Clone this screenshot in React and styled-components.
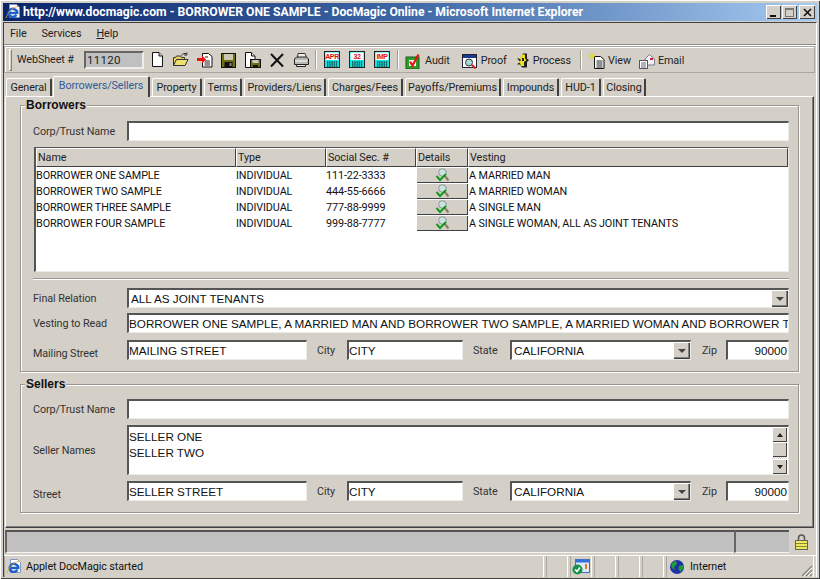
import React from 'react';
import styled, { createGlobalStyle } from 'styled-components';

const GlobalStyle = createGlobalStyle`
    html, body {
        margin: 0;
        padding: 0;
        overflow: hidden;
        background: #d4d0c8;
    }
`;

const UI_FONT = 'Roboto, Tahoma, sans-serif';
const FIELD_FONT = '"Liberation Sans", Arial, sans-serif';
const UI_SIZE = '10.8px';

const Win = styled.div`
    width: 820px;
    height: 579px;
    box-sizing: border-box;
    padding: 3px 3px 2px;
    background: #d4d0c8;
    box-shadow: inset 1px 1px 0 #fff, inset -1px -1px 0 #404040;
    display: flex;
    flex-direction: column;
    font: ${UI_SIZE} ${UI_FONT};
    letter-spacing: -0.1px;
    color: #222;
`;

const TitleBar = styled.div`
    height: 18px;
    flex: none;
    display: flex;
    align-items: center;
    padding: 0 2px;
    background: linear-gradient(90deg, #0a246a 0%, #3f68a6 50%, #a6caf0 100%);
`;

const TitleText = styled.div`
    flex: 1;
    margin-left: 2px;
    color: #fff;
    font: bold 12.2px ${UI_FONT};
    letter-spacing: 0;
    white-space: nowrap;
    overflow: hidden;
`;

const CaptionBtn = styled.div`
    width: ${p => p.$w || 15}px;
    height: 14px;
    margin-left: ${p => p.$gap || 0}px;
    background: #d4d0c8;
    box-sizing: border-box;
    box-shadow: inset 1px 1px 0 #fff, inset -1px -1px 0 #404040;
    display: flex;
    align-items: center;
    justify-content: center;
`;

const Client = styled.div`
    flex: 1;
    min-height: 0;
    display: flex;
    flex-direction: column;
    border-top: 1px solid #404040;
    border-left: 1px solid #404040;
    border-right: 1px solid #fff;
    margin-top: 1px;
`;

const MenuBar = styled.div`
    height: 21px;
    flex: none;
    display: flex;
    align-items: center;
    padding-left: 6px;
    gap: 15px;
    border-bottom: 1px solid #8c8a84;
    box-shadow: 0 1px 0 #fff;
`;

const ToolBar = styled.div`
    height: 27px;
    flex: none;
    margin: 1px 1px 0 0;
    display: flex;
    align-items: center;
    box-sizing: border-box;
    border: 1px solid #a8a69f;
    box-shadow: inset 1px 1px 0 #fff;
    padding-left: 4px;
`;

const Grip = styled.div`
    width: 1px;
    height: 20px;
    border: 1px solid;
    border-color: #fff #808080 #808080 #fff;
    background: #d4d0c8;
    flex: none;
`;

const ToolLabel = styled.div`
    margin-left: 5px;
    width: 67px;
    flex: none;
`;

const NumberBox = styled.div`
    width: 60px;
    height: 18px;
    box-sizing: border-box;
    flex: none;
    background: #c0c0c0;
    border: 2px solid;
    border-color: #666 #eee #eee #666;
    padding-left: 1px;
    font: 11.5px/14px ${UI_FONT};
    letter-spacing: 0.3px;
`;

const IconBtn = styled.div`
    width: ${p => p.$w || 24}px;
    height: 22px;
    flex: none;
    display: flex;
    align-items: center;
    justify-content: center;
`;

const ToolSep = styled.div`
    width: 1px;
    height: 19px;
    flex: none;
    background: #a09e98;
    box-shadow: 1px 0 0 #fff;
    margin: 0 ${p => p.$r}px 0 ${p => p.$l}px;
`;

const TextBtn = styled.div`
    display: flex;
    align-items: center;
    gap: 3px;
    flex: none;
    margin: 2px 0 0 ${p => p.$ml || 0}px;
`;

const TabStrip = styled.div`
    height: 23px;
    flex: none;
    display: flex;
    align-items: flex-end;
    padding-left: 2px;
    gap: 2px;
    position: relative;
    z-index: 1;
`;

const Tab = styled.div`
    width: ${p => p.$w}px;
    height: ${p => (p.$active ? 21 : 18)}px;
    box-sizing: border-box;
    flex: none;
    border-top: 1px solid #fff;
    border-left: 1px solid #fff;
    border-right: 2px solid #404040;
    border-radius: 2px 2px 0 0;
    text-align: center;
    line-height: 17px;
    color: ${p => (p.$active ? '#2f5a9a' : '#222')};
    background: #d4d0c8;
    white-space: nowrap;
    margin-bottom: ${p => (p.$active ? -1 : 0)}px;
    margin-left: ${p => (p.$active ? -1 : 0)}px;
`;

const TabPanel = styled.div`
    flex: 1;
    min-height: 0;
    margin: 0 2px 0 1px;
    box-sizing: border-box;
    border: 1px solid;
    border-color: #fff #404040 #404040 #fff;
    padding: 1px 14px 0;
    box-shadow: inset -1px -1px 0 #808080;
`;

const Group = styled.fieldset`
    margin: ${p => p.$mt || 0}px 0 0;
    padding: ${p => p.$pt}px 9px 11px 12px;
    border: 1px solid #98968f;
    box-shadow: inset 1px 1px 0 #fff, 1px 1px 0 #fff;
    min-width: 0;
`;

const GroupTitle = styled.legend`
    margin-left: -8px;
    padding: 0 1px;
    background: #d4d0c8;
    font: bold 12px/14px "Liberation Sans", Arial, sans-serif;
    letter-spacing: 0;
    color: #111;
`;

const FormRow = styled.div`
    display: flex;
    align-items: center;
    height: ${p => p.$h || 20}px;
    margin-top: ${p => p.$mt || 0}px;
`;

const RowLabel = styled.div`
    width: 94px;
    flex: none;
    color: #333;
    padding-top: ${p => p.$dy || 0}px;
    box-sizing: border-box;
`;

const Field = styled.div`
    ${p => (p.$w ? `width: ${p.$w}px; flex: none;` : 'flex: 1; min-width: 0;')}
    height: 20px;
    box-sizing: border-box;
    background: #fff;
    border: solid;
    border-color: #555 #ecebe6 #ecebe6 #555;
    border-width: 2px 1px 1px 2px;
    padding: 0 ${p => (p.$right ? 1 : 0)}px 0 ${p => p.$pl || 0}px;
    font: 11.7px ${FIELD_FONT};
    letter-spacing: 0;
    color: #111;
    white-space: nowrap;
    overflow: hidden;
    display: flex;
    align-items: center;
    justify-content: ${p => (p.$right ? 'flex-end' : 'flex-start')};
`;

const FieldText = styled.span`
    flex: 1;
    min-width: 0;
    overflow: hidden;
`;

const DropBtn = styled.div`
    width: 17px;
    height: 17px;
    flex: none;
    box-sizing: border-box;
    background: #d4d0c8;
    box-shadow: inset 1px 1px 0 #fff, inset -1px -1px 0 #404040, inset -2px -2px 0 #808080;
    display: flex;
    align-items: center;
    justify-content: center;
    &::after {
        content: '';
        border: 4px solid transparent;
        border-top: 4px solid #444;
        border-bottom: 0;
    }
`;

const InlineLabel = styled.div`
    flex: none;
    width: ${p => p.$w}px;
    padding-left: ${p => p.$pl}px;
    box-sizing: border-box;
    color: #333;
`;

const TableBox = styled.div`
    height: 125px;
    margin: 6px 0 0 1px;
    box-sizing: border-box;
    border: solid;
    border-color: #555 #ecebe6 #ecebe6 #555;
    border-width: 1px 1px 1px 2px;
    background: #fff;
`;

const COLUMNS = '200px 90px 90px 52px 1fr';

const HeaderRow = styled.div`
    display: grid;
    grid-template-columns: ${COLUMNS};
    height: 18px;
    margin-bottom: 1px;
`;

const HeaderCell = styled.div`
    box-sizing: border-box;
    background: #d4d0c8;
    border: 1px solid;
    border-color: #fff #404040 #404040 #fff;
    padding-left: 1px;
    line-height: 17px;
    color: #222;
`;

const DataRow = styled.div`
    display: grid;
    grid-template-columns: ${COLUMNS};
    height: 16px;
    color: #111;
    white-space: nowrap;
`;

const DataCell = styled.div`
    line-height: 18px;
    padding-left: ${p => p.$pl || 0}px;
`;

const DetailBtn = styled.div`
    height: 16px;
    box-sizing: border-box;
    background: #d4d0c8;
    box-shadow: inset 1px 1px 0 #fff, inset -1px -1px 0 #404040;
    display: flex;
    align-items: center;
    justify-content: center;
`;

const Divider = styled.div`
    height: 1px;
    margin: 6px 0 0;
    background: #98968f;
    box-shadow: 0 1px 0 #fff;
`;

const TextArea = styled.div`
    flex: 1;
    min-width: 0;
    height: 50px;
    box-sizing: border-box;
    background: #fff;
    border: solid;
    border-color: #555 #ecebe6 #ecebe6 #555;
    border-width: 2px 1px 1px 2px;
    display: flex;
    font: 11.7px/16px ${FIELD_FONT};
    letter-spacing: 0;
    color: #111;
`;

const AreaText = styled.div`
    flex: 1;
    padding-top: 2px;
`;

const ScrollBar = styled.div`
    width: 15px;
    flex: none;
    margin: 0 1px 0 0;
    display: flex;
    flex-direction: column;
    background: repeating-conic-gradient(#d4d0c8 0 25%, #fff 0 50%) 0 0 / 2px 2px;
`;

const ScrollBtn = styled.div`
    height: 15px;
    flex: none;
    background: #d4d0c8;
    box-sizing: border-box;
    box-shadow: inset 1px 1px 0 #fff, inset -1px -1px 0 #404040;
    display: flex;
    align-items: center;
    justify-content: center;
    margin-top: ${p => (p.$end ? 'auto' : 0)};
    &::after {
        content: '';
        border: 3.5px solid transparent;
        ${p => (p.$up ? 'border-bottom: 4px solid #222; border-top: 0;' : p.$down ? 'border-top: 4px solid #222; border-bottom: 0;' : 'display: none;')}
    }
`;

const AppletBar = styled.div`
    height: 23px;
    flex: none;
    margin: 2px 2px 0 1px;
    display: flex;
    background: #d4d0c8;
`;

const AppletCell = styled.div`
    ${p => (p.$w ? `width: ${p.$w}px; flex: none;` : 'flex: 1;')}
    box-sizing: border-box;
    background: #c0c0c0;
    border: solid;
    border-width: 2px 0 1px 2px;
    border-color: #555 #fff #f4f4f0 #666;
`;

const LockCell = styled.div`
    flex: none;
    width: 25px;
    display: flex;
    align-items: center;
    justify-content: center;
`;

const StatusBar = styled.div`
    height: 21px;
    flex: none;
    margin-top: 2px;
    display: flex;
    border-top: 1px solid #fff;
`;

const StatusCell = styled.div`
    ${p => (p.$w ? `width: ${p.$w}px; flex: none;` : 'flex: 1; min-width: 0;')}
    box-sizing: border-box;
    border-right: 1px solid #fff;
    border-left: 1px solid #a8a69f;
    margin-right: 2px;
    display: flex;
    align-items: center;
    gap: ${p => p.$gap || 0}px;
    padding-left: ${p => p.$pl || 0}px;
    white-space: nowrap;
    color: #111;
`;

const GripSlot = styled.div`
    margin-left: auto;
    align-self: flex-end;
`;

const Glyph = styled.svg`
    display: block;
    flex: none;
`;

const CalcText = styled.text`
    font: bold 7px "Liberation Sans", Arial, sans-serif;
    letter-spacing: -0.4px;
    fill: #e01010;
`;

const Icon = ({ w = 16, h = 16, children }) => (
    <Glyph width={w} height={h} viewBox={`0 0 ${w} ${h}`}>{children}</Glyph>
);

const IeIcon = () => (
    <Icon>
        <path d="M4.5 .5h7l3 3v10h-10z" fill="#fff" stroke="#7f96c4" />
        <path d="M3.5 9h8.8c.4-3.4-5-5.5-7.3-3-2.2 2.4-1.4 6.3 2 6.8 1.7.2 3.4-.4 4.5-1.8" fill="none" stroke="#1c5fc8" strokeWidth="2.4" />
        <path d="M1 14c2-6 6-10 12-12" fill="none" stroke="#e8a020" strokeWidth=".8" />
    </Icon>
);

const NewIcon = () => (
    <Icon h={17}>
        <path d="M3.5 1.5h6.5l3.5 3.5v10.5h-10z" fill="#fff" stroke="#111" />
        <path d="M10 1.5v3.5h3.5" fill="#ddd" stroke="#111" />
    </Icon>
);

const OpenIcon = () => (
    <Icon>
        <path d="M.5 13.5v-8h2l1-1.5h4l1 1.5h3v2" fill="#e8d060" stroke="#333" />
        <path d="M.5 13.5l3-6h11.5l-3 6z" fill="#f0e070" stroke="#333" />
        <path d="M8.5 3.5c1-2 3-2.5 5-1.5M13.8 .5v2.5h-2.5" fill="none" stroke="#222" />
    </Icon>
);

const ImportIcon = () => (
    <Icon>
        <path d="M5.5 1.5h6l3.5 3v10.5h-9.5z" fill="#fff" stroke="#111" />
        <path d="M7.5 9h5.5M7.5 11h5.5M7.5 13h5.5M8 5h3" stroke="#222" />
        <path d="M0 6h5v-2.5l4 4-4 4v-2.5h-5z" fill="#ee1111" />
    </Icon>
);

const SaveIcon = () => (
    <Icon>
        <rect x=".5" y="1.5" width="14" height="14" fill="#6e6e10" stroke="#111" />
        <rect x="3" y="2" width="9" height="6" fill="#c8c8b0" />
        <rect x="3.5" y="10" width="8" height="5" fill="#111" />
        <rect x="8.5" y="11" width="2" height="3" fill="#888" />
    </Icon>
);

const SaveAsIcon = () => (
    <Icon>
        <path d="M.5.5h6l3.5 3.5v11.5h-9.5z" fill="#fff" stroke="#111" />
        <path d="M6.5.5v3.5h3.5" fill="#ddd" stroke="#111" />
        <rect x="5.5" y="7.5" width="10" height="8" fill="#6e6e10" stroke="#111" />
        <rect x="7.5" y="8" width="6" height="3" fill="#ccc" />
        <rect x="8" y="13" width="5" height="3" fill="#111" />
    </Icon>
);

const DeleteIcon = () => (
    <Icon>
        <path d="M2 2l12 12.5M14 2l-12 12.5" stroke="#111" strokeWidth="2" />
    </Icon>
);

const PrintIcon = () => (
    <Icon>
        <path d="M5 1.5h7l1.5 4h-9z" fill="#eee" stroke="#333" />
        <path d="M1.5 7l2-2h10l2 2v5.5h-14z" fill="#b8b8b0" stroke="#222" />
        <path d="M2 9h12" stroke="#fff" />
        <path d="M3.5 12.5h9v2h-9z" fill="#eee" stroke="#222" />
    </Icon>
);

const CalcIcon = ({ label }) => {
    const dots = [];
    for (let row = 0; row < 3; row++) {
        for (let col = 0; col < 5; col++) {
            dots.push(<rect key={`${row}-${col}`} x={3 + col * 2.2} y={10.5 + row * 2} width="1.4" height="1.1" fill="#111" />);
        }
    }
    return (
        <Icon h={17}>
            <rect x=".5" y=".5" width="15" height="16" fill="#12e8e8" stroke="#222" />
            <rect x="1.5" y="1.5" width="13" height="7.5" fill="#fff" />
            <CalcText x="8" y="8" textAnchor="middle">{label}</CalcText>
            {dots}
        </Icon>
    );
};

const AuditIcon = () => (
    <Icon w={17}>
        <rect x="1" y="4" width="13" height="12" fill="#28a028" stroke="#1a5a1a" />
        <rect x="4" y="7" width="7" height="6" fill="#fff" />
        <path d="M5 8.5l2.5 4 6-11" fill="none" stroke="#e81010" strokeWidth="2.2" />
    </Icon>
);

const ProofIcon = () => (
    <Icon>
        <rect x=".5" y="1.5" width="14" height="13" fill="#fff" stroke="#223" />
        <rect x="1" y="2" width="13" height="3" fill="#1a3a90" />
        <circle cx="7" cy="9.5" r="3.5" fill="#a8d8d8" stroke="#333" />
        <path d="M10 12l3.5 3.5" stroke="#d02020" strokeWidth="2" />
    </Icon>
);

const ProcessIcon = () => (
    <Icon w={14}>
        <path d="M7 .5h4v5l2 1.5-2 2v5.5h-5l-2-3h-3l3-3-3-3h3z" fill="#222" />
        <path d="M6 1.5h3v4l1.5 1.5-2.5 2v4h-3l-1-3h-1.5l2.5-3-2.5-2.5h2z" fill="#f4e020" />
        <path d="M6 5h2v3h-2z" fill="#222" />
    </Icon>
);

const ViewIcon = () => (
    <Icon>
        <path d="M5.5 3.5h6l3.5 3v9h-9.5z" fill="#fff" stroke="#111" />
        <path d="M7.5 8h6M7.5 10h6M7.5 12h6M7.5 14h6" stroke="#222" />
        <path d="M3 0v6M0 3h6M1 1l4 4M5 1l-4 4" stroke="#e8d820" />
    </Icon>
);

const EmailIcon = () => (
    <Icon>
        <path d="M6 6l4.5-4.5 5 4.5v6h-9.5z" fill="#f4f4f4" stroke="#778" />
        <rect x="11" y="5" width="3" height="2" fill="#c02040" />
        <rect x=".5" y="7.5" width="8" height="8" fill="#fff" stroke="#556" />
        <path d="M2 10h5M2 12h5M2 14h5" stroke="#667" />
    </Icon>
);

const DetailIcon = () => (
    <Icon w={18} h={14}>
        <path d="M11 7l4.5 5.5" stroke="#8a7868" strokeWidth="2" />
        <circle cx="9.5" cy="4.5" r="3.8" fill="#cfe0e0" stroke="#8a96a0" />
        <path d="M3.5 8l3.5 4 6-6" fill="none" stroke="#129a18" strokeWidth="2" />
    </Icon>
);

const GlobeIcon = () => (
    <Icon>
        <circle cx="8" cy="8" r="7" fill="#2030a8" />
        <path d="M4 3l3-1 1 3-3 3 1 3-3-2-1-3zM10 7l4-1 .5 3-3 4-2-3z" fill="#20a030" />
    </Icon>
);

const LockIcon = () => (
    <Icon w={13} h={16}>
        <path d="M3.5 7v-3a3 3 0 0 1 6 0v3" fill="none" stroke="#555" strokeWidth="1.5" />
        <rect x=".5" y="6.5" width="12" height="9" fill="#ece860" stroke="#665" />
        <path d="M1 9.5h11M1 12.5h11" stroke="#888830" />
    </Icon>
);

const AppIconOk = () => (
    <Icon w={18}>
        <rect x="3.5" y=".5" width="14" height="13" fill="#dfe8f8" stroke="#4070c0" />
        <rect x="4" y="1" width="13" height="2.5" fill="#3070d8" />
        <rect x="13" y="5" width="2" height="5" fill="#e08020" />
        <circle cx="5.5" cy="10.5" r="5" fill="#189048" />
        <path d="M3 10.5l2 2 3-4" fill="none" stroke="#fff" strokeWidth="1.6" />
    </Icon>
);

const ResizeGrip = () => (
    <Icon w={13} h={13}>
        <path d="M12 2l-10 10M12 6l-6 6M12 10l-2 2" stroke="#8c8a84" strokeWidth="1.5" />
        <path d="M12.5 3.5l-9 9M12.5 7.5l-5 5M12.5 11.5l-1 1" stroke="#fff" />
    </Icon>
);

const MinGlyph = () => <Icon w={9} h={9}><rect x="1" y="7" width="6" height="2" fill="#111" /></Icon>;
const MaxGlyph = () => <Icon w={9} h={9}><rect x=".5" y="1" width="8" height="7.5" fill="none" stroke="#777" /><rect x="0" y="0" width="9" height="2" fill="#777" /></Icon>;
const CloseGlyph = () => <Icon w={9} h={9}><path d="M1 1l7 7M8 1l-7 7" stroke="#111" strokeWidth="1.6" /></Icon>;

const tabs = [
    ['General', 46], ['Borrowers/Sellers', 97], ['Property', 50], ['Terms', 38], ['Providers/Liens', 82],
    ['Charges/Fees', 75], ['Payoffs/Premiums', 96], ['Impounds', 56], ['HUD-1', 40], ['Closing', 43],
];

const borrowers = [
    ['BORROWER ONE SAMPLE', 'INDIVIDUAL', '111-22-3333', 'A MARRIED MAN'],
    ['BORROWER TWO SAMPLE', 'INDIVIDUAL', '444-55-6666', 'A MARRIED WOMAN'],
    ['BORROWER THREE SAMPLE', 'INDIVIDUAL', '777-88-9999', 'A SINGLE MAN'],
    ['BORROWER FOUR SAMPLE', 'INDIVIDUAL', '999-88-7777', 'A SINGLE WOMAN, ALL AS JOINT TENANTS'],
];

const AddressRow = ({ label, street, mt }) => (
    <FormRow $mt={mt}>
        <RowLabel $dy={6}>{label}</RowLabel>
        <Field $w={180}>{street}</Field>
        <InlineLabel $w={40} $pl={10}>City</InlineLabel>
        <Field $w={116}>CITY</Field>
        <InlineLabel $w={47} $pl={10}>State</InlineLabel>
        <Field $w={181} $pl={2}><FieldText>CALIFORNIA</FieldText><DropBtn /></Field>
        <InlineLabel $w={35} $pl={11}>Zip</InlineLabel>
        <Field $right>90000</Field>
    </FormRow>
);

const App = () => (
    <Win>
        <GlobalStyle />
        <TitleBar>
            <IeIcon />
            <TitleText>http://www.docmagic.com - BORROWER ONE SAMPLE - DocMagic Online - Microsoft Internet Explorer</TitleText>
            <CaptionBtn><MinGlyph /></CaptionBtn>
            <CaptionBtn $gap={1}><MaxGlyph /></CaptionBtn>
            <CaptionBtn $gap={2} $w={16}><CloseGlyph /></CaptionBtn>
        </TitleBar>
        <Client>
            <MenuBar>
                <span>File</span>
                <span>Services</span>
                <span><u>H</u>elp</span>
            </MenuBar>
            <ToolBar>
                <Grip />
                <ToolLabel>WebSheet #</ToolLabel>
                <NumberBox>11120</NumberBox>
                <IconBtn $w={1} />
                <IconBtn><NewIcon /></IconBtn>
                <IconBtn><OpenIcon /></IconBtn>
                <IconBtn><ImportIcon /></IconBtn>
                <IconBtn><SaveIcon /></IconBtn>
                <IconBtn><SaveAsIcon /></IconBtn>
                <IconBtn><DeleteIcon /></IconBtn>
                <IconBtn><PrintIcon /></IconBtn>
                <ToolSep $l={2} $r={3} />
                <IconBtn $w={25}><CalcIcon label="APR" /></IconBtn>
                <IconBtn $w={25}><CalcIcon label="32" /></IconBtn>
                <IconBtn $w={25}><CalcIcon label="IMP" /></IconBtn>
                <ToolSep $l={3} $r={7} />
                <TextBtn><AuditIcon />Audit</TextBtn>
                <TextBtn $ml={12}><ProofIcon />Proof</TextBtn>
                <TextBtn $ml={9}><ProcessIcon />Process</TextBtn>
                <ToolSep $l={9} $r={8} />
                <TextBtn><ViewIcon />View</TextBtn>
                <TextBtn $ml={8}><EmailIcon />Email</TextBtn>
            </ToolBar>
            <TabStrip>
                {tabs.map(([name, w]) => (
                    <Tab key={name} $w={w} $active={name === 'Borrowers/Sellers'}>{name}</Tab>
                ))}
            </TabStrip>
            <TabPanel>
                <Group $pt={9}>
                    <GroupTitle>Borrowers</GroupTitle>
                    <FormRow>
                        <RowLabel>Corp/Trust Name</RowLabel>
                        <Field />
                    </FormRow>
                    <TableBox>
                        <HeaderRow>
                            <HeaderCell>Name</HeaderCell>
                            <HeaderCell>Type</HeaderCell>
                            <HeaderCell>Social Sec. #</HeaderCell>
                            <HeaderCell>Details</HeaderCell>
                            <HeaderCell>Vesting</HeaderCell>
                        </HeaderRow>
                        {borrowers.map(([name, type, ssn, vesting]) => (
                            <DataRow key={name}>
                                <DataCell>{name}</DataCell>
                                <DataCell>{type}</DataCell>
                                <DataCell>{ssn}</DataCell>
                                <DetailBtn><DetailIcon /></DetailBtn>
                                <DataCell $pl={1}>{vesting}</DataCell>
                            </DataRow>
                        ))}
                    </TableBox>
                    <Divider />
                    <FormRow $mt={9}>
                        <RowLabel>Final Relation</RowLabel>
                        <Field $pl={2}><FieldText>ALL AS JOINT TENANTS</FieldText><DropBtn /></Field>
                    </FormRow>
                    <FormRow $mt={5}>
                        <RowLabel>Vesting to Read</RowLabel>
                        <Field>BORROWER ONE SAMPLE, A MARRIED MAN AND BORROWER TWO SAMPLE, A MARRIED WOMAN AND BORROWER THREE SAMPLE</Field>
                    </FormRow>
                    <AddressRow label="Mailing Street" street="MAILING STREET" mt={7} />
                </Group>
                <Group $pt={8} $mt={5}>
                    <GroupTitle>Sellers</GroupTitle>
                    <FormRow>
                        <RowLabel>Corp/Trust Name</RowLabel>
                        <Field />
                    </FormRow>
                    <FormRow $mt={6} $h={50}>
                        <RowLabel>Seller Names</RowLabel>
                        <TextArea>
                            <AreaText>SELLER ONE<br />SELLER TWO</AreaText>
                            <ScrollBar>
                                <ScrollBtn $up />
                                <ScrollBtn />
                                <ScrollBtn $down $end />
                            </ScrollBar>
                        </TextArea>
                    </FormRow>
                    <AddressRow label="Street" street="SELLER STREET" mt={6} />
                </Group>
            </TabPanel>
            <AppletBar>
                <AppletCell />
                <AppletCell $w={55} />
                <LockCell><LockIcon /></LockCell>
            </AppletBar>
            <StatusBar>
                <StatusCell $gap={4} $pl={1}><IeIcon />Applet DocMagic started</StatusCell>
                <StatusCell $w={22} />
                <StatusCell $w={22} $pl={1}><AppIconOk /></StatusCell>
                <StatusCell $w={22} />
                <StatusCell $w={22} />
                <StatusCell $w={22} />
                <StatusCell $w={148} $gap={5} $pl={2}><GlobeIcon />Internet<GripSlot><ResizeGrip /></GripSlot></StatusCell>
            </StatusBar>
        </Client>
    </Win>
);

export default App;
